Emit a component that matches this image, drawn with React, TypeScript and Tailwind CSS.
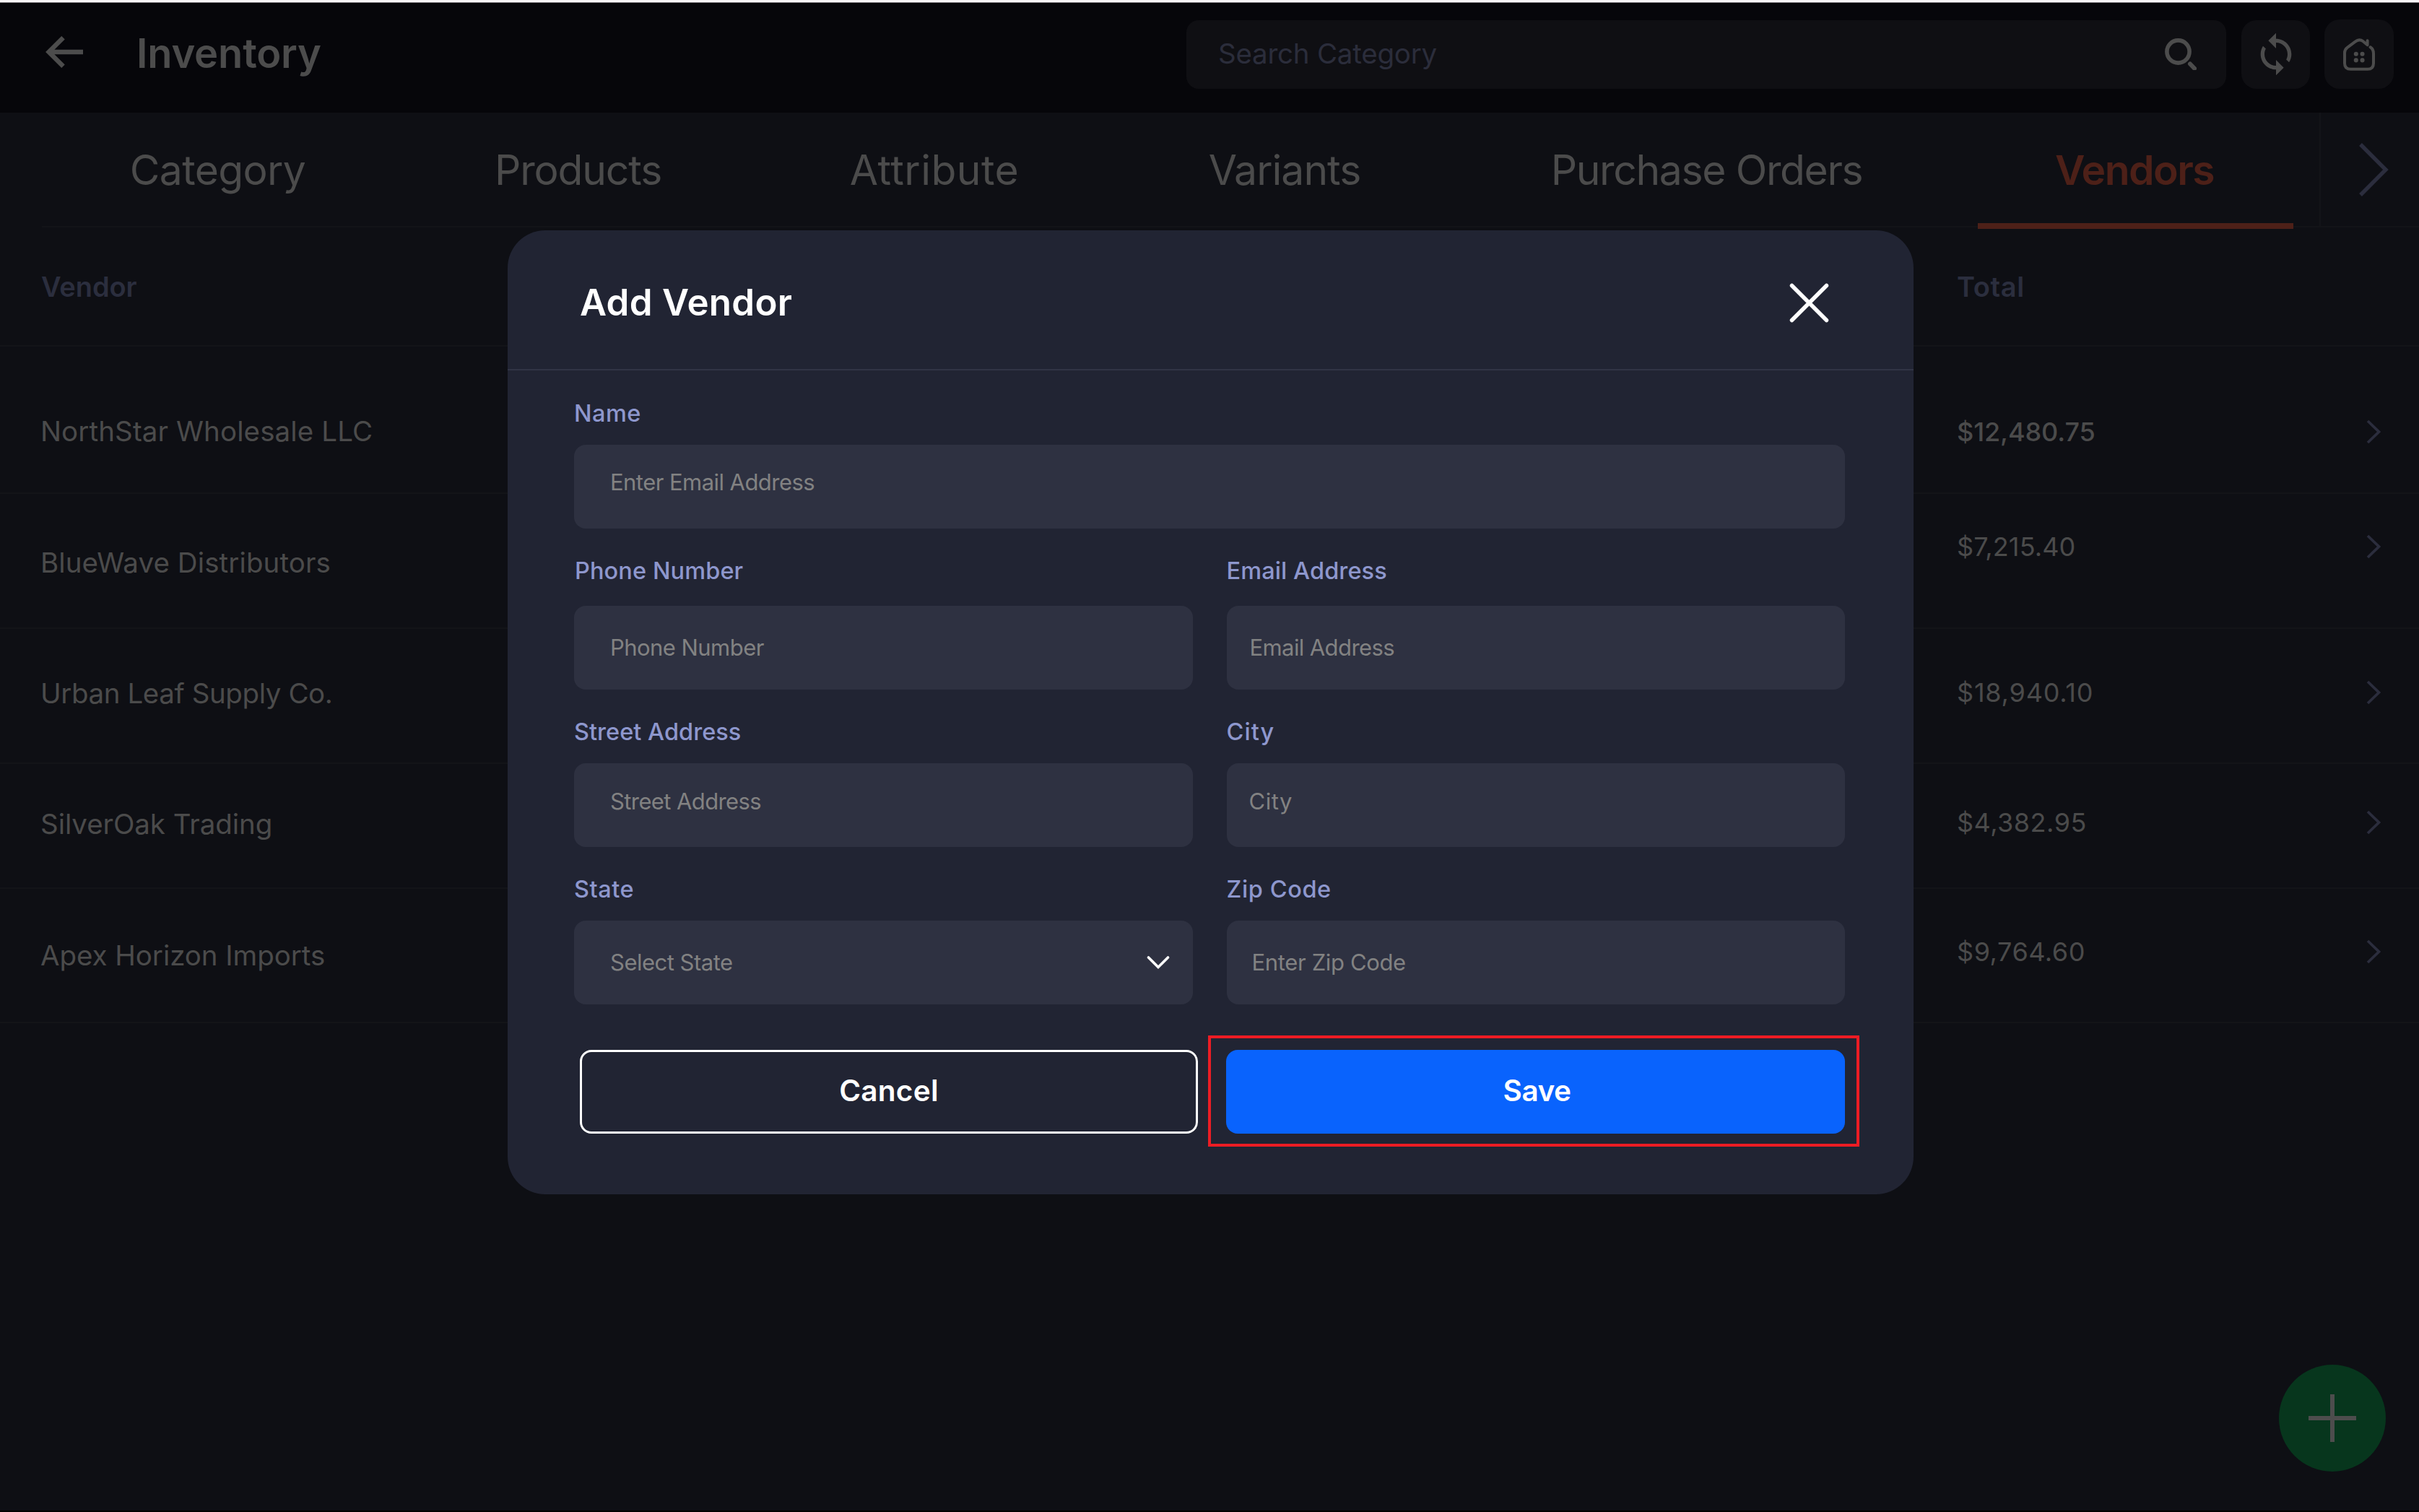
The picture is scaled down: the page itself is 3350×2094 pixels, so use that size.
import { MdSync } from 'react-icons/md'

const tabs = [
  { label: 'Category', className: 'w-[557px] tracking-[-0.65px]' },
  { label: 'Products', className: 'w-[441px] tracking-[-1.16px]' },
  { label: 'Attribute', className: 'w-[546px] tracking-[0.47px]' },
  { label: 'Variants', className: 'w-[424px] tracking-[-0.97px]' },
  { label: 'Purchase Orders', className: 'w-[748px] pr-[3px] tracking-[-1.37px]' },
]

const vendors = [
  {
    name: 'NorthStar Wholesale LLC',
    total: '$12,480.75',
    row: 'h-[204px]',
    nameClass: 'pt-[97px] tracking-[0.11px]',
    totalClass: 'pt-[98px] font-medium tracking-[-0.09px]',
  },
  {
    name: 'BlueWave Distributors',
    total: '$7,215.40',
    row: 'h-[187px]',
    nameClass: 'pt-[75px] tracking-[0.1px]',
    totalClass: 'pt-[53px] tracking-[0.14px]',
  },
  {
    name: 'Urban Leaf Supply Co.',
    total: '$18,940.10',
    row: 'h-[187px]',
    nameClass: 'pt-[69px] tracking-[-0.41px]',
    totalClass: 'pt-[68px] tracking-[0.8px]',
  },
  {
    name: 'SilverOak Trading',
    total: '$4,382.95',
    row: 'h-[173px]',
    nameClass: 'pt-[63px] tracking-[-0.07px]',
    totalClass: 'pt-[61px] tracking-[0.5px]',
  },
  {
    name: 'Apex Horizon Imports',
    total: '$9,764.60',
    row: 'h-[186px]',
    nameClass: 'pt-[72px] tracking-[-0.06px]',
    totalClass: 'pt-[67px] tracking-[0.55px]',
  },
]

function BackArrow() {
  return (
    <svg className="mb-1.5 h-11 w-[52px]" viewBox="0 0 52 44" fill="none" stroke="#4c4c4c" strokeWidth="6.4">
      <path d="M52 22H5M24.5 2.2L4.6 22l19.9 19.8" />
    </svg>
  )
}

function SearchIcon() {
  return (
    <svg className="h-11 w-11" viewBox="0 0 44 44" fill="none" stroke="#4c4c4c" strokeLinecap="round">
      <circle cx="18.5" cy="18.5" r="15.6" strokeWidth="5.6" />
      <path d="M35 35.5l6 6.3" strokeWidth="6" />
    </svg>
  )
}

function HomeIcon() {
  return (
    <svg className="h-[45px] w-11" viewBox="0 0 131 133" fill="none">
      <path
        d="M112 36Q125 45 125 62V103Q125 127 101 127H31Q6 127 6 103V60Q6 46 17 38L50 13Q66 1 82 12L100 27V9"
        stroke="#4c4c4c"
        strokeWidth="12"
        strokeLinecap="round"
        strokeLinejoin="round"
      />
      <g fill="#4c4c4c">
        <circle cx="53" cy="64" r="9" />
        <circle cx="79" cy="64" r="9" />
        <circle cx="53" cy="90" r="9" />
        <circle cx="79" cy="90" r="9" />
      </g>
    </svg>
  )
}

function Header() {
  return (
    <header className="flex h-[152px] items-center bg-[#06060a] pr-[35px] pb-[10px] pl-[63px]">
      <BackArrow />
      <h1 className="mb-[3px] ml-[74px] text-[56px] font-semibold tracking-[-0.18px] text-[#4c4c4c]">Inventory</h1>
      <div className="ml-auto flex h-[95px] w-[1440px] items-center justify-between rounded-[17px] bg-[#0f0f13] pr-[41px] pl-[44px]">
        <span className="text-[38.5px] tracking-[-0.23px] text-[#2b2d3b]">Search Category</span>
        <SearchIcon />
      </div>
      <button className="ml-[21px] flex size-[95px] items-center justify-center rounded-[21px] bg-[#0f0f13] text-[#4c4c4c]">
        <MdSync size={64} />
      </button>
      <button className="ml-5 flex size-[96px] items-center justify-center rounded-[21px] bg-[#0f0f13]">
        <HomeIcon />
      </button>
    </header>
  )
}

function TabBar() {
  return (
    <nav className="flex h-[157px] pl-[23px] text-[57px] text-[#4b4b4b]">
      {tabs.map((tab) => (
        <div key={tab.label} className={`flex items-center justify-center pt-0.5 ${tab.className}`}>
          {tab.label}
        </div>
      ))}
      <div className="relative flex w-[437px] items-center justify-center pt-0.5 pr-[3px] font-semibold tracking-[-1.54px] text-[#4d2018]">
        Vendors
        <span className="absolute inset-x-0 -bottom-1 h-2 bg-[#4d2018]" />
      </div>
      <div className="ml-9 flex flex-1 items-center border-l-2 border-[#131418] pl-[53px]">
        <svg className="h-[76px] w-[42px]" viewBox="0 0 42 76" fill="none" stroke="#2b2d3d" strokeWidth="5.4">
          <path d="M2 3l35 35L2 73" />
        </svg>
      </div>
    </nav>
  )
}

function VendorTable() {
  return (
    <section className="text-[#4b4b4b]">
      <div className="flex h-[165px] items-center border-b-2 border-[#131418] pt-0.5 pl-[57px] text-[38px] font-semibold text-[#2b2e3e]">
        <span className="w-[2653px] tracking-[-0.1px]">Vendor</span>
        <span className="tracking-[0.66px]">Total</span>
      </div>
      {vendors.map((vendor) => (
        <div key={vendor.name} className={`flex items-start border-b-2 border-[#131418] pr-[51px] pl-[56px] ${vendor.row}`}>
          <span className={`w-[2654px] text-[38.5px] leading-10 ${vendor.nameClass}`}>{vendor.name}</span>
          <div className={`flex flex-1 items-center justify-between text-[36px] leading-10 ${vendor.totalClass}`}>
            {vendor.total}
            <svg className="h-[34px] w-[22px]" viewBox="0 0 22 34" fill="none" stroke="#2b2d3d" strokeWidth="3.8">
              <path d="M2 2l15.500 15L2 32" />
            </svg>
          </div>
        </div>
      ))}
    </section>
  )
}

type FieldProps = {
  label: string
  placeholder: string
  labelClass: string
  boxClass: string
  select?: boolean
}

function Field({ label, placeholder, labelClass, boxClass, select }: FieldProps) {
  return (
    <div className="flex flex-col">
      <label className={`text-[32.5px] leading-10 font-medium text-[#8e97cd] ${labelClass}`}>{label}</label>
      <div
        className={`flex h-[116px] items-center justify-between rounded-2xl bg-[#2e3141] pr-[32px] text-[31px] leading-10 text-[#828282] ${boxClass}`}
      >
        {placeholder}
        {select && (
          <svg className="h-5 w-8" viewBox="0 0 32 20" fill="none" stroke="#fff" strokeWidth="3.6" strokeLinecap="round">
            <path d="M2.500 3L16 16.500 29.500 3" />
          </svg>
        )}
      </div>
    </div>
  )
}

function AddVendorModal() {
  return (
    <div className="fixed inset-0 flex items-start justify-center pt-[319px] pl-[3px]">
      <div className="h-[1335px] w-[1947px] rounded-[52px] bg-[#212433]">
        <div className="flex h-[194px] items-center justify-between border-b-2 border-[#313445] pt-2 pr-[117px] pl-[100px]">
          <h2 className="pt-px text-[51px] font-semibold tracking-[0.28px] text-white">Add Vendor</h2>
          <svg className="size-[55px]" viewBox="0 0 55 55" stroke="#fff" strokeWidth="5.5" strokeLinecap="round">
            <path d="M3.500 3.500l48 48M51.500 3.500l-48 48" />
          </svg>
        </div>

        <div className="pt-10 pr-[95px] pl-[92px]">
          <Field
            label="Name"
            placeholder="Enter Email Address"
            labelClass="mb-[23px] tracking-[0.47px]"
            boxClass="pb-[12px] pl-[50px] tracking-[-0.55px]"
          />
          <div className="mt-[39px] grid grid-cols-2 gap-x-[47px] gap-y-[39px]">
            <Field
              label="Phone Number"
              placeholder="Phone Number"
              labelClass="mb-7 pl-px tracking-[0.1px]"
              boxClass="pb-px pl-[50px] tracking-[-0.55px]"
            />
            <Field
              label="Email Address"
              placeholder="Email Address"
              labelClass="mb-7 tracking-[0.1px]"
              boxClass="pb-px pl-[32px] tracking-[-0.6px]"
            />
            <Field
              label="Street Address"
              placeholder="Street Address"
              labelClass="mb-[23px] tracking-[0.03px]"
              boxClass="pb-[10px] pl-[50px] tracking-[-0.6px]"
            />
            <Field
              label="City"
              placeholder="City"
              labelClass="mb-[23px] tracking-[1.1px]"
              boxClass="pb-[10px] pl-[31px] tracking-[0.5px]"
            />
            <Field
              label="State"
              placeholder="Select State"
              labelClass="mb-[23px] tracking-[0.5px]"
              boxClass="pl-[50px] tracking-[-0.5px]"
              select
            />
            <Field
              label="Zip Code"
              placeholder="Enter Zip Code"
              labelClass="mb-[23px] tracking-[0.61px]"
              boxClass="pl-[35px] tracking-[-0.35px]"
            />
          </div>

          <div className="mt-[63px] flex gap-[39px] pl-2 text-[40.500px] font-semibold text-white">
            <button className="h-[116px] flex-1 rounded-2xl border-[3px] border-white pb-0.5 tracking-[0.28px]">
              Cancel
            </button>
            <div className="relative w-[857px]">
              <button className="h-[116px] w-full rounded-2xl bg-[#0963fd] pb-0.5 pl-1 tracking-[-0.5px]">Save</button>
              <span className="pointer-events-none absolute -top-5 -right-5 -bottom-[18px] -left-[25px] border-4 border-[#ed1c24]" />
            </div>
          </div>
        </div>
      </div>
    </div>
  )
}

export default function App() {
  return (
    <div className="flex h-[2094px] w-[3350px] flex-col overflow-hidden border-b-2 border-black bg-[#0e0f14] font-[Inter,sans-serif]">
      <div className="h-1 shrink-0 border-b border-[#7d7a80] bg-[#f7f5f7]" />
      <Header />
      <TabBar />
      <hr className="ml-[58px] border-t-2 border-[#131418]" />
      <VendorTable />

      <AddVendorModal />

      <button className="fixed right-[46px] bottom-[56px] flex size-[148px] items-center justify-center rounded-full bg-[#07361d]">
        <svg className="size-[66px]" viewBox="0 0 66 66" stroke="#4d4d4d" strokeWidth="6">
          <path d="M33 0v66M0 33h66" />
        </svg>
      </button>
    </div>
  )
}
